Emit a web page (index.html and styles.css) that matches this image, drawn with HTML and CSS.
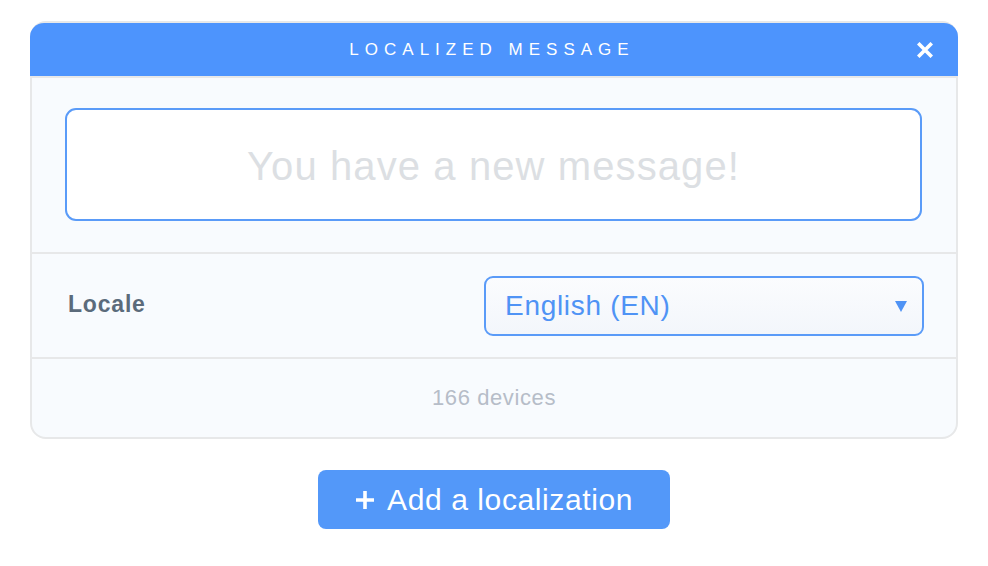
FILE: index.html
```html
<!DOCTYPE html>
<html lang="en">
<head>
<meta charset="utf-8">
<title>Localized message</title>
<link rel="stylesheet" href="styles.css">
</head>
<body>
<div class="page">
  <section class="card">
    <header class="card-header">
      <span class="spacer"></span>
      <h1 class="title">LOCALIZED MESSAGE</h1>
      <button class="close" aria-label="Close">
        <svg width="16" height="16" viewBox="0 0 16 16"><path d="M2.5 2.5 L13.5 13.5 M13.5 2.5 L2.5 13.5" stroke="#fff" stroke-width="3.6" stroke-linecap="square" fill="none"/></svg>
      </button>
    </header>
    <div class="message-section">
      <div class="message-box"><span class="placeholder">You have a new message!</span></div>
    </div>
    <div class="locale-row">
      <span class="locale-label">Locale</span>
      <div class="select">
        <span class="select-value">English (EN)</span>
        <svg class="caret" width="12" height="11" viewBox="0 0 12 11"><path d="M0 0 H12 L6 11 Z" fill="#4f93f5"/></svg>
      </div>
    </div>
    <div class="card-footer">166 devices</div>
  </section>
  <button class="add-btn">
    <svg class="plus" width="20" height="20" viewBox="0 0 20 20"><path d="M10 1 V19 M1 10 H19" stroke="#fff" stroke-width="3.6" fill="none"/></svg>
    <span>Add a localization</span>
  </button>
</div>
</body>
</html>
```
FILE: styles.css
```css
* { box-sizing: border-box; }
html, body { margin: 0; padding: 0; background: #ffffff; }
body { font-family: "Liberation Sans", Arial, Helvetica, sans-serif; }

.page {
  display: flex;
  flex-direction: column;
  align-items: center;
  padding-top: 21px;
}

.card {
  width: 928px;
  border: 2px solid #e7e8e9;
  border-radius: 16px;
  background: #f8fbfe;
}

.card-header {
  margin: 0 -2px;
  height: 55px;
  background: #4d94fd;
  border-radius: 14px 14px 0 0;
  border-bottom: 2px solid #e7e8e9;
  display: grid;
  grid-template-columns: 1fr auto 1fr;
  align-items: center;
}

.title {
  margin: 0;
  color: #ffffff;
  font-size: 17px;
  font-weight: 400;
  letter-spacing: 6px;
  margin-right: 4px;
  line-height: 1;
}

.close {
  justify-self: end;
  margin-right: 25px;
  background: none;
  border: 0;
  padding: 0;
  width: 16px;
  height: 16px;
  display: flex;
  cursor: pointer;
}

.message-section {
  padding: 30px 34px 31px 33px;
  border-bottom: 2px solid #e7e8e9;
}

.message-box {
  height: 113px;
  background: #ffffff;
  border: 2px solid #5a9bf8;
  border-radius: 11px;
  display: flex;
  align-items: center;
  justify-content: center;
}

.placeholder {
  color: #dcdfe3;
  font-size: 40px;
  letter-spacing: 1.1px;
  line-height: 1;
  margin-top: 2px;
}

.locale-row {
  display: flex;
  align-items: center;
  justify-content: space-between;
  padding: 22px 32px 21px 36px;
  border-bottom: 2px solid #e7e8e9;
}

.locale-label {
  color: #5b6b7b;
  font-size: 23px;
  font-weight: 700;
  letter-spacing: 0.8px;
  margin-top: -4px;
}

.select {
  width: 440px;
  height: 60px;
  border: 2px solid #5a9bf8;
  border-radius: 9px;
  background: linear-gradient(#fbfcfe, #f3f6fb);
  display: flex;
  align-items: center;
  justify-content: space-between;
  padding: 0 15px 0 19px;
}

.select-value {
  color: #4f93f5;
  font-size: 28px;
  letter-spacing: 0.7px;
}

.caret { margin-top: 1px; }

.card-footer {
  height: 78px;
  display: flex;
  align-items: center;
  justify-content: center;
  color: #b6bdc8;
  font-size: 22px;
  letter-spacing: 0.6px;
}

.add-btn {
  margin-top: 31px;
  width: 352px;
  height: 59px;
  border: 0;
  border-radius: 8px;
  background: #5398f9;
  color: #ffffff;
  font-family: inherit;
  font-size: 30px;
  letter-spacing: 0.6px;
  display: flex;
  align-items: center;
  justify-content: center;
  gap: 12px;
  padding: 0;
  cursor: pointer;
}

.plus { flex: none; }
```
